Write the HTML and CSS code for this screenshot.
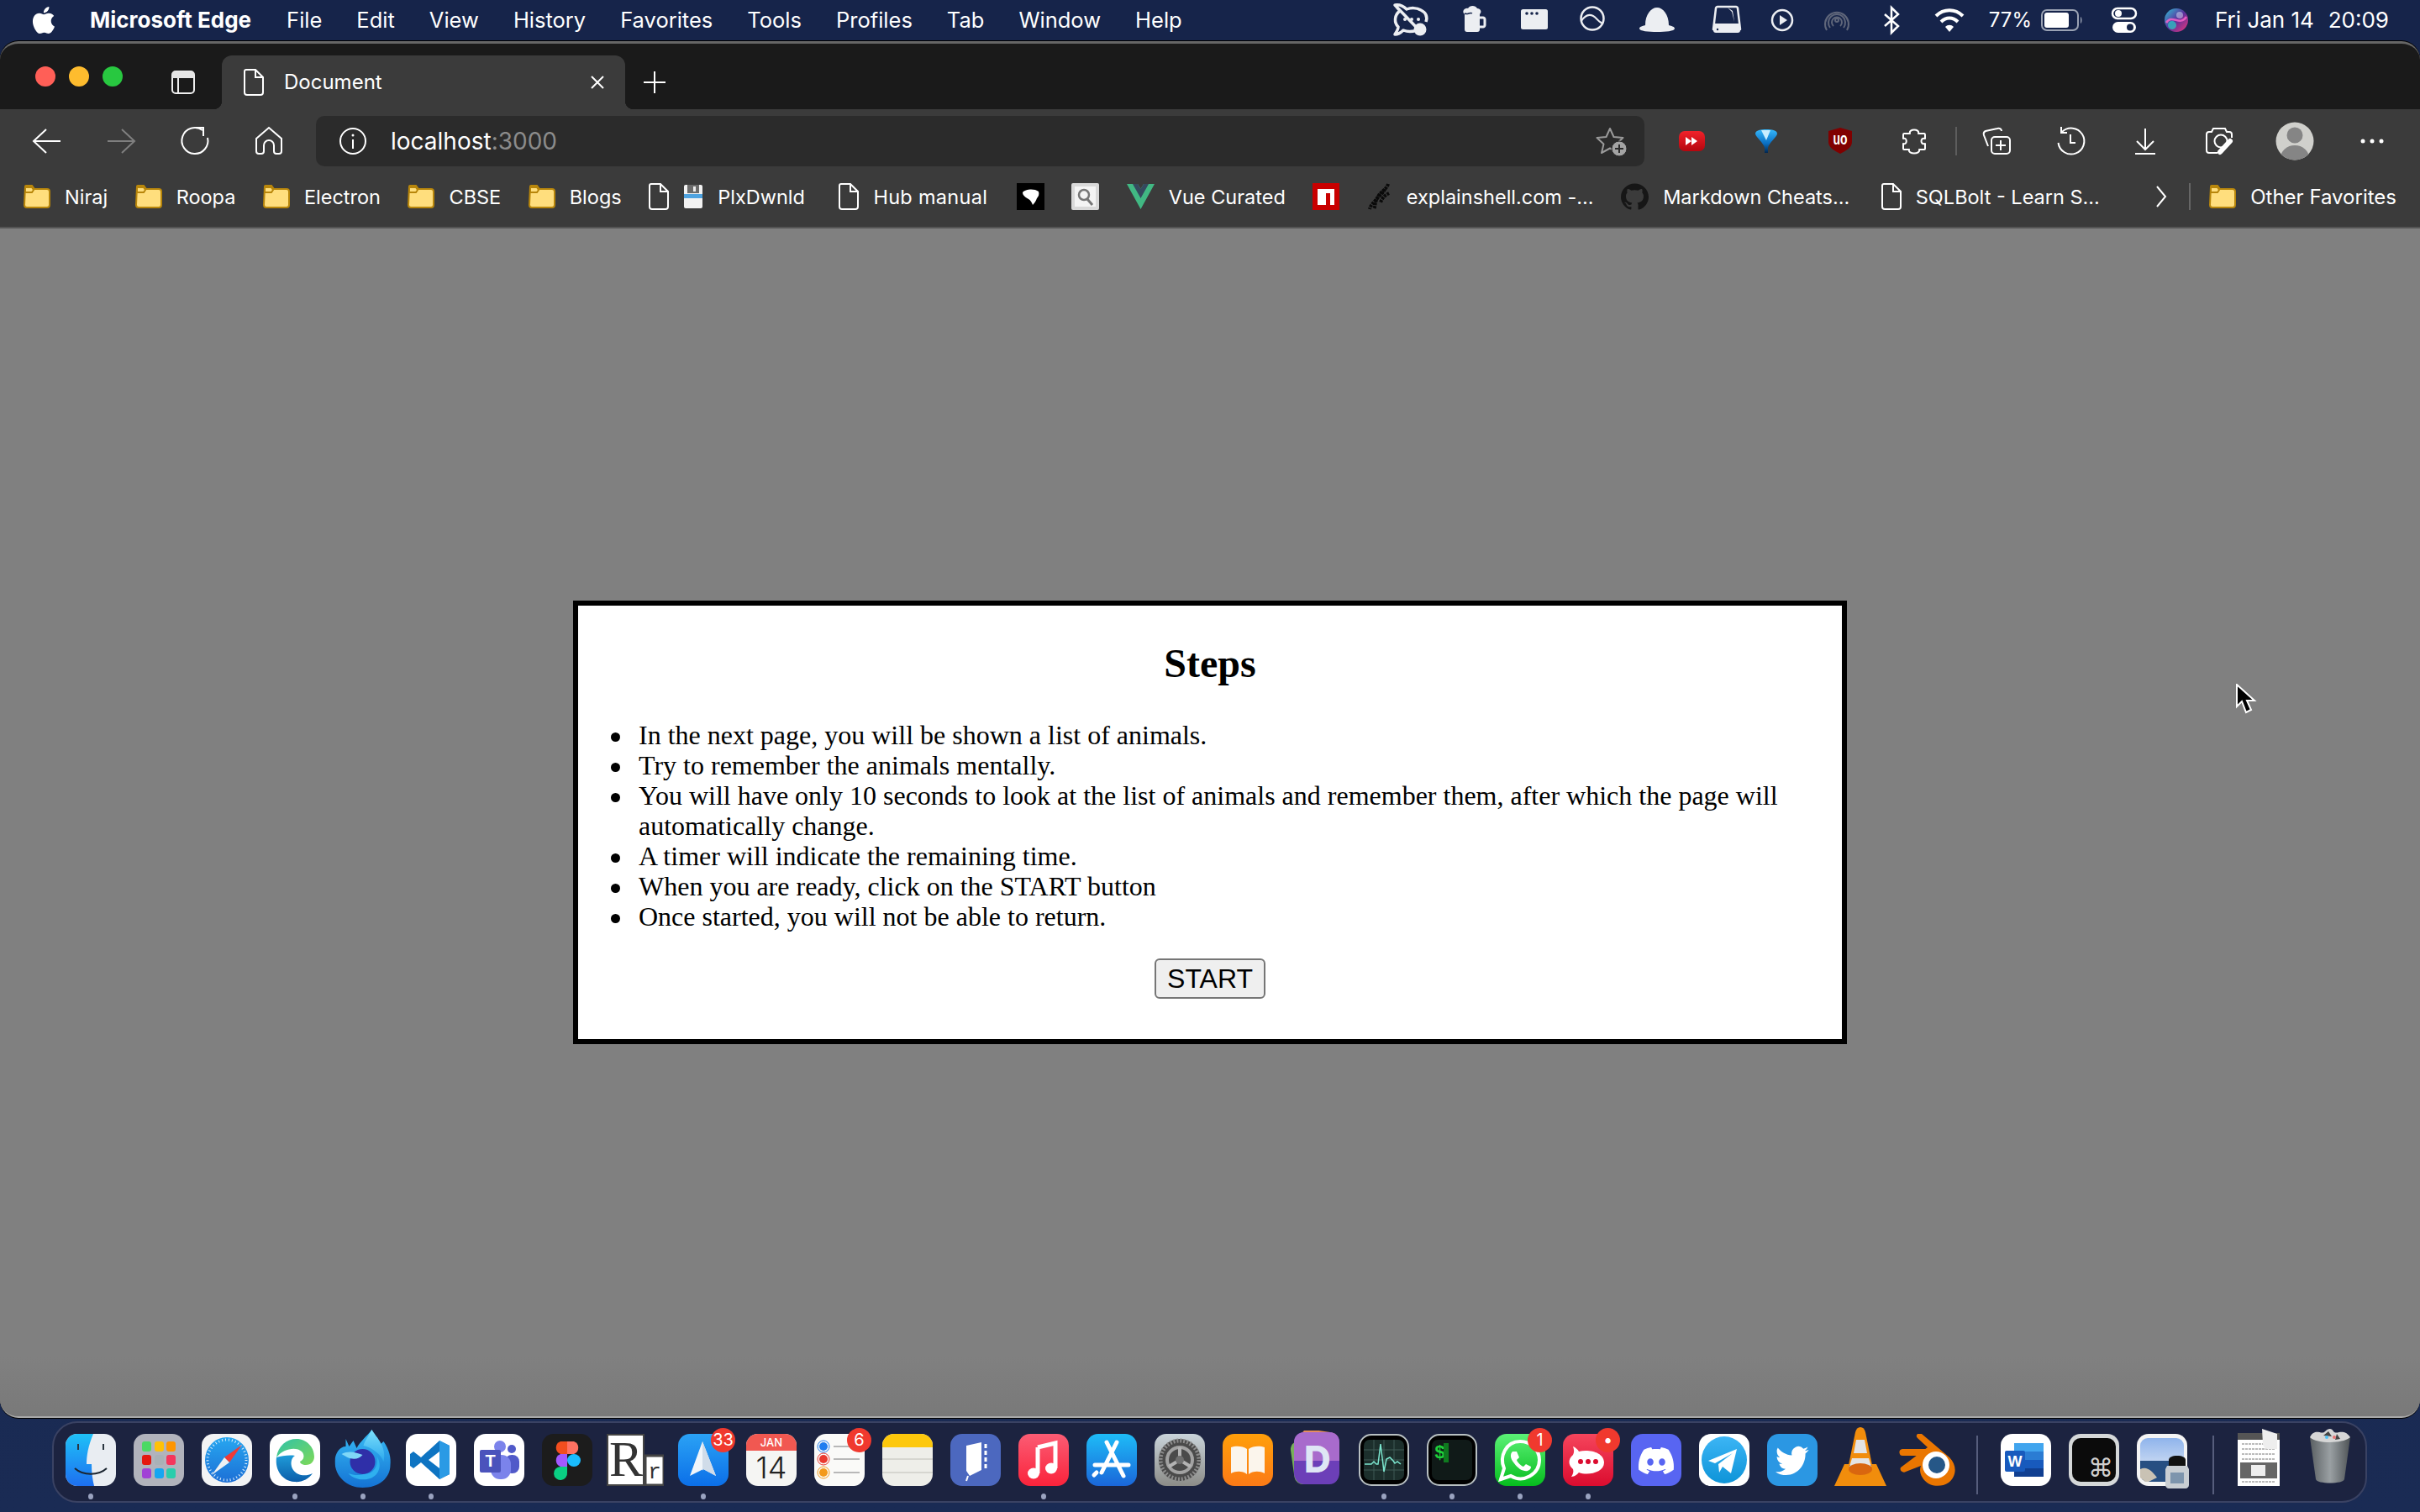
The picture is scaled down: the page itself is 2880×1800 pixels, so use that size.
FILE: index.html
```html
<!DOCTYPE html>
<html lang="en">
<head>
<meta charset="utf-8">
<title>Document</title>
<link rel="stylesheet" href="styles.css">
</head>
<body>
<header class="menubar">
  <svg class="apple" width="32" height="36" viewBox="0 0 24 24"><path fill="#fff" d="M12.152 6.896c-.948 0-2.415-1.078-3.96-1.04-2.04.027-3.91 1.183-4.961 3.014-2.117 3.675-.546 9.103 1.519 12.09 1.013 1.454 2.208 3.09 3.792 3.039 1.52-.065 2.09-.987 3.935-.987 1.831 0 2.35.987 3.96.948 1.637-.026 2.676-1.48 3.676-2.948 1.156-1.688 1.636-3.325 1.662-3.415-.039-.013-3.182-1.221-3.22-4.857-.026-3.04 2.48-4.494 2.597-4.559-1.429-2.09-3.623-2.324-4.39-2.376-2-.156-3.675 1.09-4.61 1.09zM15.53 3.83c.843-1.012 1.4-2.427 1.245-3.83-1.207.052-2.662.805-3.532 1.818-.78.896-1.454 2.338-1.273 3.714 1.338.104 2.715-.688 3.559-1.701"/></svg>
  <nav class="menus">
    <span class="appname">Microsoft Edge</span><span>File</span><span>Edit</span><span>View</span><span>History</span><span>Favorites</span><span>Tools</span><span>Profiles</span><span>Tab</span><span>Window</span><span>Help</span>
  </nav>
  <div class="tray">
    <svg width="76" height="50" viewBox="-38 -25 76 50"><path d="M-20-18C-14-19-9-16-6-13-1-15 6-15 11-12 17-9 19-4 17 2M8 11C2 14-5 14-10 12-13 15-17 17-20 17-18 14-16 11-16 8-21 3-21-6-14-11-16-13-18-16-20-18Z" fill="none" stroke="#eceef2" stroke-width="3.500" stroke-linejoin="round"/><circle cx="10" cy="11" r="7.500" fill="#eceef2"/><g fill="#eceef2"><circle cx="-8" cy="-1" r="2"/><circle cx="0" cy="-1" r="2"/><circle cx="8" cy="-1" r="2"/></g></svg>
    <svg width="76" height="50" viewBox="-38 -25 76 50"><path fill="#eceef2" d="M-13-7C-17-10-13-15-9-14-7-18 0-18 2-14 6-14 8-10 5-7V11C5 13 4 14 2 14H-10C-12 14-13 13-13 11Z"/><path fill="none" stroke="#eceef2" stroke-width="3" d="M5-3H9C10-3 11-2 11-1V6C11 7 10 8 9 8H5"/><path d="M-13-8C-9-6-7-10-4-8" fill="none" stroke="#16244a" stroke-width="1.500"/></svg>
    <svg width="64" height="50" viewBox="-32 -25 64 50"><rect x="-16" y="-13" width="32" height="24" rx="2.500" fill="#eceef2"/><g fill="#16244a"><circle cx="-9" cy="-8" r="1.800"/><circle cx="-3" cy="-8" r="1.800"/><circle cx="3" cy="-8" r="1.800"/></g></svg>
    <svg width="74" height="50" viewBox="-37 -25 74 50"><circle cy="-2" r="13.500" fill="none" stroke="#eceef2" stroke-width="2.500"/><path d="M-13 1C-8-7-3-7 1-5S8 3 13 4" fill="none" stroke="#eceef2" stroke-width="2"/></svg>
    <svg width="80" height="50" viewBox="-40 -25 80 50"><path fill="#eceef2" d="M-14 6C-14-7-7-15 0-15S14-7 14 6C18 7 21 8 21 10 21 13 10 14 0 14S-21 13-21 10C-21 8-18 7-14 6Z"/></svg>
    <svg width="86" height="50" viewBox="-43 -25 86 50"><path fill="none" stroke="#eceef2" stroke-width="2.500" stroke-linejoin="round" d="M-11-16H11C12-16 13-15 13-14L16 11H-16L-13-14C-13-15-12-16-11-16Z"/><path fill="#eceef2" d="M-16 4H16V12C16 14 15 15 13 15H-13C-15 15-16 14-16 12Z"/><circle cx="-11" cy="11" r="1.200" fill="#16244a"/><path d="M1-15L7-11 9 2 6-10Z" fill="#eceef2"/></svg>
    <svg width="46" height="50" viewBox="-23 -25 46 50"><circle r="12" fill="none" stroke="#eceef2" stroke-width="2.500"/><path d="M-3-6L6 0-3 6Z" fill="#eceef2"/></svg>
    <svg width="84" height="50" viewBox="-42 -25 84 50"><g fill="none" stroke="#5f667a" stroke-width="2"><path d="M-12 12A14 14 0 1 1 12 12"/><path d="M-8 9A10 10 0 1 1 8 9"/><path d="M-4 7A6 6 0 1 1 4 7"/><circle r="2"/></g></svg>
    <svg width="46" height="50" viewBox="-23 -25 46 50"><path d="M-8-7L8 7 0 15V-15L8-7-8 7" fill="none" stroke="#fff" stroke-width="2.500"/></svg>
    <svg width="92" height="50" viewBox="-46 -25 92 50"><g fill="none" stroke="#fff" stroke-width="4"><path d="M-16-5C-7-14 7-14 16-5"/><path d="M-10 2C-4-4 4-4 10 2"/></g><path d="M-5 8C-2 5 2 5 5 8L0 14Z" fill="#fff"/></svg>
    <span class="pct">77%</span>
    <svg width="68" height="50" viewBox="-34 -25 68 50"><rect x="-28" y="-12" width="43" height="24" rx="6" fill="none" stroke="#9aa2b3" stroke-width="2"/><rect x="-25" y="-9" width="29" height="18" rx="3" fill="#fff"/><path d="M18-4C20-3 20 3 18 4Z" fill="#9aa2b3"/></svg>
    <svg width="72" height="50" viewBox="-36 -25 72 50"><rect x="-14" y="-14" width="28" height="12" rx="6" fill="none" stroke="#fff" stroke-width="2.500"/><circle cx="-7" cy="-8" r="4" fill="#fff"/><rect x="-14" y="2" width="28" height="13" rx="6.500" fill="#fff"/><circle cx="7" cy="8.500" r="4" fill="#16244a"/></svg>
    <svg width="52" height="50" viewBox="-26 -25 52 50"><defs><linearGradient id="siri" x1="0" y1="0" x2="1" y2="1"><stop offset="0" stop-color="#2fc6d8"/><stop offset=".5" stop-color="#5a2f9c"/><stop offset="1" stop-color="#f0387b"/></linearGradient></defs><circle r="14" fill="url(#siri)"/><path d="M-12 3C-5-8 4 8 12-4" stroke="#f6c" stroke-width="2.500" fill="none" opacity=".8"/><circle cx="-5" cy="6" r="5" fill="#26d0c6" opacity=".7"/><circle cx="4" cy="-6" r="4" fill="#e8f6ff" opacity=".45"/></svg>
    <div class="clock"><span>Fri Jan 14</span><span>20:09</span></div>
  </div>
</header>

<main class="window">
  <div class="tabstrip">
    <div class="lights"><i class="light red"></i><i class="light amber"></i><i class="light green"></i></div>
    <svg class="sidebar-icon" width="28" height="28" viewBox="0 0 28 28"><rect x="1" y="1" width="26" height="26" rx="4" fill="none" stroke="#eee" stroke-width="2"/><path d="M1 5A4 4 0 0 1 5 1H23A4 4 0 0 1 27 5V9H1Z" fill="#e6e6e6"/><path d="M8 9V27" stroke="#eee" stroke-width="2"/></svg>
    <div class="tab">
      <svg width="24" height="32" viewBox="0 0 24 32"><path d="M3 1H14L23 10V28A3 3 0 0 1 20 31H4A3 3 0 0 1 1 28V3A2 2 0 0 1 3 1ZM14 1V10H23" fill="none" stroke="#fff" stroke-width="2"/></svg>
      <span class="tab-title">Document</span>
      <svg class="tab-close" width="16" height="16" viewBox="0 0 16 16"><path d="M1 1L15 15M15 1L1 15" stroke="#fff" stroke-width="2"/></svg>
    </div>
    <svg class="newtab" width="26" height="26" viewBox="0 0 26 26"><path d="M13 0V26M0 13H26" stroke="#fff" stroke-width="2"/></svg>
  </div>

  <div class="toolbar">
    <svg width="88" height="60" viewBox="-44 -30 88 60"><path d="M16 0H-16M-1-14L-16 0-1 14" class="ln"/></svg>
    <svg width="88" height="60" viewBox="-44 -30 88 60"><path d="M16 0H-16M1-14L16 0 1 14" class="ln dim"/></svg>
    <svg width="88" height="60" viewBox="-44 -30 88 60"><path d="M9-13A15.500 15.500 0 1 0 15-4M1-16H10V-6" class="ln"/></svg>
    <svg width="88" height="60" viewBox="-44 -30 88 60"><path d="M-15-3L0-16 15-3V12A3 3 0 0 1 12 15H9A3 3 0 0 1 6 12V5A6 6 0 0 0-6 5V12A3 3 0 0 1-9 15H-12A3 3 0 0 1-15 12Z" class="ln"/></svg>
    <div class="address">
      <svg width="32" height="32" viewBox="-16 -16 32 32"><circle r="15" class="ln"/><path d="M0-2V9" class="ln"/><circle cy="-7" r="1.500" fill="#fff"/></svg>
      <span class="url">localhost<span class="port">:3000</span></span>
      <svg class="star" width="40" height="36" viewBox="-20 -18 40 36"><path d="M-1-15L3.500-5 14.500-4 6.500 3.500 9 14-1 8.500-11 14-8.500 3.500-16.500-4-5.500-5Z" fill="none" stroke="#9a9a9a" stroke-width="2" stroke-linejoin="round"/><circle cx="10" cy="9" r="9" fill="#a3a3a3" stroke="#2b2b2b" stroke-width="1"/><path d="M10 4V14M5 9H15" stroke="#2b2b2b" stroke-width="2"/></svg>
    </div>
    <div class="tools-left">
      <svg width="88" height="60" viewBox="-44 -30 88 60"><defs><linearGradient id="yt" x1="0" y1="0" x2="0" y2="1"><stop offset="0" stop-color="#f0222a"/><stop offset="1" stop-color="#b5060e"/></linearGradient></defs><rect x="-16" y="-12" width="31" height="24" rx="7" fill="url(#yt)"/><path d="M-8-5L-1 0-8 5ZM-1-5L6 0-1 5Z" fill="#fff"/></svg>
      <svg width="88" height="60" viewBox="-44 -30 88 60"><defs><linearGradient id="pin" x1="0" y1="0" x2="0" y2="1"><stop offset="0" stop-color="#36b8fb"/><stop offset=".6" stop-color="#0a6fc4"/><stop offset="1" stop-color="#02264d"/></linearGradient></defs><path d="M-13-9C-13-13-6-14 0-14S13-13 13-9C13-5 3 2 2 8V14H-2V8C-3 2-13-5-13-9Z" fill="url(#pin)"/><path d="M-6-13H5L0-1Z" fill="#c9eeff"/></svg>
      <svg width="88" height="60" viewBox="-44 -30 88 60"><path d="M0-16L14-12V1C14 8 6 12 0 15-6 12-14 8-14 1V-12Z" fill="#800000"/><text class="ublock" y="4" text-anchor="middle" textLength="17" lengthAdjust="spacingAndGlyphs">uo</text></svg>
      <svg width="88" height="60" viewBox="-44 -30 88 60"><path d="M-5-9C-7-15 7-15 5-9H12C13-9 13-8 13-7V-3C7-5 7 5 13 3V9C13 10 13 10 12 10H6C8 16-8 16-6 10H-12C-13 10-13 10-13 9V3C-8 5-8-5-13-3V-7C-13-8-13-9-12-9Z" class="ln round"/></svg>
    </div>
    <i class="tool-sep"></i>
    <div class="tools-right">
      <svg width="88" height="60" viewBox="-44 -30 88 60"><path d="M-11 6L-16-7C-17-10-16-11-14-12L0-15C3-16 5-14 5-12" class="ln"/><rect x="-7" y="-5" width="22" height="20" rx="4" class="ln"/><path d="M4-1V11M-2 5H10" class="ln"/></svg>
      <svg width="88" height="60" viewBox="-44 -30 88 60"><path d="M-11-11A15.500 15.500 0 1 1-15.500 2M-12-17V-10H-5M-1-8V2H5" class="ln"/></svg>
      <svg width="88" height="60" viewBox="-44 -30 88 60"><path d="M0-15V10M-10 0L0 10 10 0M-12 15H12" class="ln"/></svg>
      <svg width="88" height="60" viewBox="-44 -30 88 60"><path d="M-2 14H-12C-14 14-15 13-15 11V-8C-15-10-14-11-12-11H-9L-7-15H7L9-11H12C14-11 15-10 15-8V-4" class="ln"/><circle cx="2" cy="0" r="7.500" class="ln"/><path d="M1 13L13 0" stroke="#fff" stroke-width="6" stroke-linecap="round"/></svg>
      <svg class="avatar" width="92" height="60" viewBox="-46 -30 92 60"><defs><clipPath id="av"><circle r="22.500"/></clipPath></defs><circle r="22.500" fill="#d0d0cc"/><g clip-path="url(#av)" fill="#858585"><circle cy="-7" r="9.500"/><ellipse cy="20" rx="17" ry="15"/></g></svg>
      <svg width="92" height="60" viewBox="-46 -30 92 60"><g fill="#fff"><circle cx="-11" r="2.500"/><circle r="2.500"/><circle cx="11" r="2.500"/></g></svg>
    </div>
  </div>

  <div class="bookmarks">
    <a class="bm"><svg class="folder" width="32" height="28" viewBox="0 0 32 28"><use href="#fld"/></svg>Niraj</a>
    <a class="bm"><svg class="folder" width="32" height="28" viewBox="0 0 32 28"><use href="#fld"/></svg>Roopa</a>
    <a class="bm"><svg class="folder" width="32" height="28" viewBox="0 0 32 28"><use href="#fld"/></svg>Electron</a>
    <a class="bm"><svg class="folder" width="32" height="28" viewBox="0 0 32 28"><use href="#fld"/></svg>CBSE</a>
    <a class="bm"><svg class="folder" width="32" height="28" viewBox="0 0 32 28"><use href="#fld"/></svg>Blogs</a>
    <a class="bm"><svg width="24" height="32" viewBox="0 0 24 32"><use href="#doc"/></svg><svg width="24" height="28" viewBox="0 0 24 28"><rect x="1" y="0" width="22" height="28" rx="2" fill="#f2f2f2"/><rect x="5" y="0" width="14" height="10" fill="#6b6b6b"/><rect x="12" y="2" width="3" height="6" fill="#eee"/><rect x="1" y="11" width="22" height="5" fill="#4fa3e0"/></svg>PlxDwnld</a>
    <a class="bm hub"><svg width="24" height="32" viewBox="0 0 24 32"><use href="#doc"/></svg>Hub manual</a>
    <svg width="33" height="32" viewBox="0 0 33 32"><rect width="33" height="32" fill="#000"/><path d="M7 11C10 7 21 6 26 10 27 13 26 16 24 18 23 21 21 24 19 26 18 23 16 20 14 19 11 17 7 15 7 11Z" fill="#fff"/></svg>
    <svg width="33" height="32" viewBox="0 0 33 32"><rect width="33" height="32" rx="2" fill="#d9d9d9"/><rect x="4" y="4" width="25" height="24" fill="#f4f4f4"/><circle cx="15" cy="14" r="6" fill="none" stroke="#777" stroke-width="2.500"/><path d="M19 19L25 26" stroke="#777" stroke-width="3"/></svg>
    <a class="bm"><svg width="33" height="32" viewBox="0 0 33 32"><path d="M0 1H13L16.500 7 20 1H33L16.500 31Z" fill="#41b883"/><path d="M7 1H13L16.500 7 20 1H26L16.500 18Z" fill="#35495e"/></svg>Vue Curated</a>
    <svg width="32" height="32" viewBox="0 0 32 32"><rect width="32" height="32" fill="#c80000"/><path d="M6 7H26V26H21V12H16V26H6Z" fill="#fff"/></svg>
    <a class="bm"><svg width="30" height="32" viewBox="0 0 30 32"><g fill="none" stroke="#0a0a0a" stroke-width="4" stroke-dasharray="3 1"><path d="M25 1C23 8 16 10 13 16S5 24 3 31"/><path d="M21 7C19 13 13 15 11 20S10 27 8 31"/><path d="M26 12C22 14 18 17 16 23"/></g></svg>explainshell.com -...</a>
    <a class="bm"><svg width="33" height="32" viewBox="0 0 24 24" preserveAspectRatio="none"><path fill="#161616" d="M12 .297c-6.630 0-12 5.373-12 12 0 5.303 3.438 9.800 8.205 11.385.600.113.820-.258.820-.577 0-.285-.010-1.040-.015-2.040-3.338.724-4.042-1.610-4.042-1.610C4.422 18.070 3.633 17.700 3.633 17.700c-1.087-.744.084-.729.084-.729 1.205.084 1.838 1.236 1.838 1.236 1.070 1.835 2.809 1.305 3.495.998.108-.776.417-1.305.760-1.605-2.665-.300-5.466-1.332-5.466-5.930 0-1.310.465-2.380 1.235-3.220-.135-.303-.540-1.523.105-3.176 0 0 1.005-.322 3.300 1.230.960-.267 1.980-.399 3-.405 1.020.006 2.040.138 3 .405 2.280-1.552 3.285-1.230 3.285-1.230.645 1.653.240 2.873.120 3.176.765.840 1.230 1.910 1.230 3.220 0 4.610-2.805 5.625-5.475 5.920.420.360.810 1.096.810 2.220 0 1.606-.015 2.896-.015 3.286 0 .315.210.690.825.570C20.565 22.092 24 17.592 24 12.297c0-6.627-5.373-12-12-12"/></svg>Markdown Cheats...</a>
    <a class="bm sql"><svg width="24" height="32" viewBox="0 0 24 32"><use href="#doc"/></svg>SQLBolt - Learn S...</a>
    <div class="bm-end">
      <svg width="14" height="26" viewBox="0 0 14 26"><path d="M2 1L12 13 2 25" fill="none" stroke="#fff" stroke-width="2"/></svg>
      <i class="bm-sep"></i>
      <a class="bm"><svg class="folder" width="32" height="28" viewBox="0 0 32 28"><use href="#fld"/></svg>Other Favorites</a>
    </div>
  </div>

  <section class="content">
    <article class="card">
      <h2 class="card-title">Steps</h2>
      <ul class="steps">
        <li>In the next page, you will be shown a list of animals.</li>
        <li>Try to remember the animals mentally.</li>
        <li>You will have only 10 seconds to look at the list of animals and remember them, after which the page will automatically change.</li>
        <li>A timer will indicate the remaining time.</li>
        <li>When you are ready, click on the START button</li>
        <li>Once started, you will not be able to return.</li>
      </ul>
      <div class="actions"><button class="start" type="button">START</button></div>
    </article>
    <svg class="cursor" width="26" height="36" viewBox="0 0 26 36"><path d="M2 1V27L8 21 13 34 19 31 14 20H23Z" fill="#000" stroke="#fff" stroke-width="2"/></svg>
  </section>
</main>

<footer class="dock">
  <div class="di"><svg width="60" height="62" viewBox="0 0 60 62"><defs><linearGradient id="fd" x1="0" y1="0" x2="0" y2="1"><stop offset="0" stop-color="#1fc1f7"/><stop offset="1" stop-color="#1d6ff0"/></linearGradient></defs><rect width="60" height="62" rx="14" fill="#e9edf2"/><path d="M14 0H33C27 14 25 26 25 36H31C31 46 32 54 34 62H14A14 14 0 0 1 0 48V14A14 14 0 0 1 14 0Z" fill="url(#fd)"/><path d="M15 12V19M45 12V19" stroke="#2a3540" stroke-width="2"/><path d="M11 41C21 50 39 50 49 41" fill="none" stroke="#1b2530" stroke-width="2"/></svg><i class="run"></i></div>
  <div class="di"><svg width="60" height="62" viewBox="0 0 60 62"><rect width="60" height="62" rx="14" fill="#b1b3bc"/><rect x="10" y="9" width="11" height="12" rx="3" fill="#4cd964"/><rect x="25" y="9" width="11" height="12" rx="3" fill="#ffc107"/><rect x="39" y="9" width="11" height="12" rx="3" fill="#ff9500"/><rect x="10" y="25" width="11" height="12" rx="3" fill="#e5170f"/><rect x="25" y="25" width="11" height="12" rx="3" fill="#a9b1b6"/><rect x="39" y="25" width="11" height="12" rx="3" fill="#f5365c"/><rect x="10" y="41" width="11" height="12" rx="3" fill="#a142d6"/><rect x="25" y="41" width="11" height="12" rx="3" fill="#15a6f2"/><rect x="39" y="41" width="11" height="12" rx="3" fill="#28cdac"/></svg></div>
  <div class="di"><svg width="60" height="62" viewBox="0 0 60 62"><defs><linearGradient id="sf" x1="0" y1="0" x2="0" y2="1"><stop offset="0" stop-color="#27a7f0"/><stop offset="1" stop-color="#1c6fd6"/></linearGradient></defs><rect width="60" height="62" rx="14" fill="#f2f3f4"/><ellipse cx="30" cy="31" rx="26" ry="27" fill="url(#sf)"/><ellipse cx="30" cy="31" rx="23" ry="24" fill="none" stroke="#dff0fb" stroke-width="3" stroke-dasharray="1 3"/><path d="M48 13L27 28 33 34Z" fill="#f03a36"/><path d="M12 49L33 34 27 28Z" fill="#eef1f3"/></svg></div>
  <div class="di"><svg width="60" height="62" viewBox="0 0 60 62"><defs><linearGradient id="ed" x1="0" y1="0" x2="1" y2="1"><stop offset="0" stop-color="#2fc2a8"/><stop offset="1" stop-color="#7ed957"/></linearGradient><linearGradient id="ed2" x1="0" y1="0" x2="0" y2="1"><stop offset="0" stop-color="#1f9bd8"/><stop offset="1" stop-color="#0b5eaa"/></linearGradient></defs><rect width="60" height="62" rx="14" fill="#fff"/><path d="M8 28C10 14 20 6 32 6 44 6 53 16 53 27 53 33 49 37 43 37 39 37 36 35 36 33 41 31 42 25 38 21 32 15 16 17 8 28Z" fill="url(#ed)"/><path d="M8 28C6 43 15 56 29 57 38 58 46 54 51 47 43 51 33 50 28 43 24 37 25 29 30 26 24 25 14 26 8 28Z" fill="url(#ed2)"/></svg><i class="run"></i></div>
  <div class="di"><svg class="over ff" width="67" height="69" viewBox="0 0 67 69"><defs><linearGradient id="ff" x1="0" y1="0" x2="0" y2="1"><stop offset="0" stop-color="#38bdf5"/><stop offset="1" stop-color="#1472d4"/></linearGradient><linearGradient id="ff2" x1="0" y1="0" x2="0" y2="1"><stop offset="0" stop-color="#7de0fb"/><stop offset="1" stop-color="#2aa8ee"/></linearGradient></defs><path d="M13 11L17 20 22 13 26 22C30 14 38 8 44 0 46 6 50 12 54 18 55 16 57 15 58 14 65 24 67 34 66 42 66 58 52 69 33 69 15 69 0 56 0 38 0 28 6 20 13 20Z" fill="url(#ff)"/><path d="M44 0C50 10 62 20 58 38 55 30 46 22 34 19 36 12 40 8 44 0Z" fill="url(#ff2)"/><circle cx="33" cy="38" r="15" fill="#2f2fa8"/><path d="M34 53C46 53 52 44 50 32 56 40 54 54 42 58 34 61 22 59 16 52 22 54 28 55 34 53Z" fill="#2fb0ef"/><path d="M8 29C18 24 26 28 33 30 29 35 22 36 15 33Z" fill="#7fd7f7"/></svg><i class="run"></i></div>
  <div class="di"><svg width="60" height="62" viewBox="0 0 60 62"><rect width="60" height="62" rx="14" fill="#fff"/><path d="M40 8L52 14V48L40 54 18 34 9 41 5 38V24L9 21 18 28ZM40 21L27 31 40 41Z" fill="#0e74c2"/><path d="M40 8L52 14V48L40 54Z" fill="#2a9ae5"/></svg><i class="run"></i></div>
  <div class="di"><svg width="60" height="62" viewBox="0 0 60 62"><rect width="60" height="62" rx="14" fill="#fff"/><circle cx="31" cy="15" r="7" fill="#7b83eb"/><circle cx="45" cy="18" r="5" fill="#5059c9"/><rect x="37" y="25" width="17" height="22" rx="8" fill="#5059c9"/><rect x="20" y="25" width="24" height="29" rx="11" fill="#7b83eb"/><rect x="7" y="19" width="25" height="27" rx="2" fill="#4b53bc"/><text class="msT" x="19.500" y="39" text-anchor="middle">T</text></svg></div>
  <div class="di"><svg width="60" height="62" viewBox="0 0 60 62"><rect width="60" height="62" rx="14" fill="#1c1c1c"/><path d="M30 9H22A8 8 0 0 0 22 24H30Z" fill="#f24e1e"/><path d="M30 9H38A8 8 0 0 1 38 24H30Z" fill="#ff7262"/><path d="M30 24H22A8 8 0 0 0 22 39H30Z" fill="#a259ff"/><ellipse cx="38" cy="31.500" rx="8" ry="7.500" fill="#1abcfe"/><path d="M22 39H30V46A8 8 0 1 1 22 39Z" fill="#0acf83"/></svg></div>
  <div class="di"><svg class="over" width="68" height="66" viewBox="0 0 68 66"><rect x="1" y="5" width="43" height="60" fill="#fff" stroke="#444" stroke-width="2"/><text class="rbig" x="23" y="54" text-anchor="middle">R</text><rect x="46" y="30" width="22" height="35" fill="#fff" stroke="#444" stroke-width="3"/><text class="rsmall" x="57" y="57" text-anchor="middle">r</text></svg></div>
  <div class="di"><svg width="60" height="62" viewBox="0 0 60 62"><defs><linearGradient id="sp" x1="0" y1="0" x2="0" y2="1"><stop offset="0" stop-color="#2aa2f5"/><stop offset="1" stop-color="#0b6fe8"/></linearGradient></defs><rect width="60" height="62" rx="14" fill="url(#sp)"/><path d="M29 9L45 50 30 42 14 50Z" fill="#f0f5fa"/><path d="M29 9V44L30 42 45 50Z" fill="#d0dce9"/></svg><b class="badge">33</b><i class="run"></i></div>
  <div class="di"><svg width="60" height="62" viewBox="0 0 60 62"><rect width="60" height="62" rx="14" fill="#f5f5f3"/><path d="M0 20V14A14 14 0 0 1 14 0H46A14 14 0 0 1 60 14V20Z" fill="#f15851"/><text class="calm" x="30" y="15" text-anchor="middle">JAN</text><text class="cald" x="30" y="53" text-anchor="middle">14</text></svg></div>
  <div class="di"><svg width="60" height="62" viewBox="0 0 60 62"><rect width="60" height="62" rx="14" fill="#fafaf8"/><circle cx="11" cy="15" r="5" fill="#1e7df0"/><circle cx="11" cy="15" r="7" fill="none" stroke="#1e7df0"/><circle cx="11" cy="30" r="5" fill="#ea3a30"/><circle cx="11" cy="30" r="7" fill="none" stroke="#ea3a30"/><circle cx="11" cy="46" r="5" fill="#f39a1c"/><circle cx="11" cy="46" r="7" fill="none" stroke="#f39a1c"/><path d="M23 15H54M23 30H54M23 46H54" stroke="#b8b8b8" stroke-width="2"/></svg><b class="badge">6</b></div>
  <div class="di"><svg width="60" height="62" viewBox="0 0 60 62"><rect width="60" height="62" rx="14" fill="#eeeee9"/><path d="M0 16V14A14 14 0 0 1 14 0H46A14 14 0 0 1 60 14V16Z" fill="#fdc80c"/><path d="M0 30H60M0 46H60" stroke="#d6d6d0" stroke-width="2"/></svg></div>
  <div class="di"><svg width="60" height="62" viewBox="0 0 60 62"><rect width="60" height="62" rx="14" fill="#4c68bf"/><path d="M19 14L37 10V43L23 50 19 44Z" fill="#fff"/><path d="M42 12V44" stroke="#fff" stroke-width="3" stroke-dasharray="5 3"/><path d="M21 50L19 56" stroke="#fff" stroke-width="2"/></svg></div>
  <div class="di"><svg width="60" height="62" viewBox="0 0 60 62"><defs><linearGradient id="mu" x1="0" y1="0" x2="0" y2="1"><stop offset="0" stop-color="#fb5c74"/><stop offset="1" stop-color="#fa233b"/></linearGradient></defs><rect width="60" height="62" rx="14" fill="url(#mu)"/><path d="M23 16L44 11V41" fill="none" stroke="#fff" stroke-width="5"/><path d="M23 16V47" stroke="#fff" stroke-width="5"/><ellipse cx="18" cy="47" rx="7" ry="6.500" fill="#fff"/><ellipse cx="39" cy="41" rx="7" ry="6.500" fill="#fff"/></svg><i class="run"></i></div>
  <div class="di"><svg width="60" height="62" viewBox="0 0 60 62"><defs><linearGradient id="as" x1="0" y1="0" x2="0" y2="1"><stop offset="0" stop-color="#1ebcf7"/><stop offset="1" stop-color="#1a66d9"/></linearGradient></defs><rect width="60" height="62" rx="14" fill="url(#as)"/><path d="M36 10L18 46M24 10L44 50M10 37H50M12 46L9 49" stroke="#fff" stroke-width="5" stroke-linecap="round" fill="none"/></svg></div>
  <div class="di"><svg width="60" height="62" viewBox="0 0 60 62"><defs><linearGradient id="sy" x1="0" y1="0" x2="0" y2="1"><stop offset="0" stop-color="#c9d4da"/><stop offset="1" stop-color="#8c8c88"/></linearGradient></defs><rect width="60" height="62" rx="14" fill="url(#sy)"/><circle cx="30" cy="31" r="25" fill="#4a4a4a"/><circle cx="30" cy="31" r="23" fill="none" stroke="#8d8d8d" stroke-width="5" stroke-dasharray="2 2"/><circle cx="30" cy="31" r="15" fill="none" stroke="#a2a2a2" stroke-width="4"/><path d="M30 31V16M30 31L17 39M30 31L43 39" stroke="#b3b3b3" stroke-width="4"/><circle cx="30" cy="31" r="5" fill="#6f6f6f"/></svg></div>
  <div class="di"><svg width="60" height="62" viewBox="0 0 60 62"><defs><linearGradient id="bk" x1="0" y1="0" x2="0" y2="1"><stop offset="0" stop-color="#ff9f0a"/><stop offset="1" stop-color="#fb7a16"/></linearGradient></defs><rect width="60" height="62" rx="14" fill="url(#bk)"/><path d="M29 18C24 14 15 14 10 16V47C16 44 24 44 29 48ZM31 18C36 14 45 14 50 16V47C44 44 36 44 31 48Z" fill="#fbf5ec"/></svg></div>
  <div class="di"><svg class="over" width="60" height="66" viewBox="0 0 60 66"><rect x="2" y="10" width="52" height="52" rx="10" fill="#79b05a" transform="rotate(-8 28 36)"/><rect x="10" y="0" width="46" height="40" rx="10" fill="#e58c5c" transform="rotate(8 32 20)"/><path d="M16 2H46C53 2 58 7 58 14V50C58 58 53 64 46 64H16C9 64 4 58 4 50V14C4 7 9 2 16 2Z" fill="#6c3fb8"/><path d="M16 2H46C53 2 58 7 58 14V36H4V14C4 7 9 2 16 2Z" fill="#a86bcc"/><text class="dash" x="32" y="50" text-anchor="middle">D</text></svg></div>
  <div class="di"><svg width="60" height="62" viewBox="0 0 60 62"><rect x="1" y="1" width="58" height="60" rx="14" fill="#000" stroke="#b8c0c2" stroke-width="2"/><rect x="6" y="7" width="48" height="48" rx="7" fill="#1c2f2c"/><path d="M6 19H54M6 31H54M6 43H54M18 7V55M30 7V55M42 7V55" stroke="#3f5a55"/><path d="M7 36H15L18 33 21 36H23L26 12 30 45 33 30 37 28 41 32 43 35 46 33 50 36" fill="none" stroke="#7ce8d0" stroke-width="1.500"/></svg><i class="run"></i></div>
  <div class="di"><svg width="60" height="62" viewBox="0 0 60 62"><rect x="1" y="1" width="58" height="60" rx="14" fill="#000" stroke="#b8c0c2" stroke-width="2"/><rect x="6" y="7" width="48" height="48" rx="7" fill="#101a18"/><text class="term" x="9" y="29">$</text><rect x="20" y="11" width="6" height="23" fill="#0f7a1f"/></svg><i class="run"></i></div>
  <div class="di"><svg width="60" height="62" viewBox="0 0 60 62"><defs><linearGradient id="wa" x1="0" y1="0" x2="0" y2="1"><stop offset="0" stop-color="#5bf176"/><stop offset="1" stop-color="#06bd1e"/></linearGradient></defs><rect width="60" height="62" rx="14" fill="url(#wa)"/><path d="M7 54L11 41C5 27 13 9 30 9 43 9 53 19 53 31 53 48 34 59 19 50Z" fill="none" stroke="#fff" stroke-width="4"/><path d="M21 21C18 24 18 29 23 35 28 42 34 45 39 44 42 43 43 41 43 39L37 36 34 39C31 38 27 34 26 31L29 28 26 21Z" fill="#fff"/></svg><b class="badge">1</b><i class="run"></i></div>
  <div class="di"><svg width="60" height="62" viewBox="0 0 60 62"><defs><linearGradient id="rc" x1="0" y1="0" x2="0" y2="1"><stop offset="0" stop-color="#f5455c"/><stop offset="1" stop-color="#db0c2f"/></linearGradient></defs><rect width="60" height="62" rx="14" fill="url(#rc)"/><path d="M12 15C15 16 18 19 19 21 31 18 49 22 49 34 49 46 30 50 19 46 17 48 14 51 10 51 12 48 13 45 12 42 6 37 6 30 12 25 14 21 13 18 12 15Z" fill="#fff"/><g fill="#db0c2f"><circle cx="21" cy="33" r="3"/><circle cx="30" cy="33" r="3"/><circle cx="39" cy="33" r="3"/></g></svg><b class="badge">•</b><i class="run"></i></div>
  <div class="di"><svg width="60" height="62" viewBox="0 0 60 62"><rect width="60" height="62" rx="14" fill="#5865f2"/><g transform="translate(9 11) scale(1.750 1.750)"><path fill="#fff" d="M20.317 4.3698a19.7913 19.7913 0 00-4.8851-1.5152.0741.0741 0 00-.0785.0371c-.211.3753-.4447.8648-.6083 1.2495-1.8447-.2762-3.68-.2762-5.4868 0-.1636-.3933-.4058-.8742-.6177-1.2495a.077.077 0 00-.0785-.037 19.7363 19.7363 0 00-4.8852 1.515.0699.0699 0 00-.0321.0277C.5334 9.0458-.319 13.5799.0992 18.0578a.0824.0824 0 00.0312.0561c2.0528 1.5076 4.0413 2.4228 5.9929 3.0294a.0777.0777 0 00.0842-.0276c.4616-.6304.8731-1.2952 1.226-1.9942a.076.076 0 00-.0416-.1057c-.6528-.2476-1.2743-.5495-1.8722-.8923a.077.077 0 01-.0076-.1277c.1258-.0943.2517-.1923.3718-.2914a.0743.0743 0 01.0776-.0105c3.9278 1.7933 8.18 1.7933 12.0614 0a.0739.0739 0 01.0785.0095c.1202.099.246.1981.3728.2924a.077.077 0 01-.0066.1276 12.2986 12.2986 0 01-1.873.8914.0766.0766 0 00-.0407.1067c.3604.698.7719 1.3628 1.225 1.9932a.076.076 0 00.0842.0286c1.961-.6067 3.9495-1.5219 6.0023-3.0294a.077.077 0 00.0313-.0552c.5004-5.177-.8382-9.6739-3.5485-13.6604a.061.061 0 00-.0312-.0286zM8.02 15.3312c-1.1825 0-2.1569-1.0857-2.1569-2.419 0-1.3332.9555-2.4189 2.157-2.4189 1.2108 0 2.1757 1.0952 2.1568 2.419 0 1.3332-.9555 2.4189-2.1569 2.4189zm7.9748 0c-1.1825 0-2.1569-1.0857-2.1569-2.419 0-1.3332.9554-2.4189 2.1569-2.4189 1.2108 0 2.1757 1.0952 2.1568 2.419 0 1.3332-.946 2.4189-2.1568 2.4189Z"/></g></svg></div>
  <div class="di"><svg width="60" height="62" viewBox="0 0 60 62"><defs><linearGradient id="tg" x1="0" y1="0" x2="0" y2="1"><stop offset="0" stop-color="#3cb5f5"/><stop offset="1" stop-color="#0e94d8"/></linearGradient></defs><rect width="60" height="62" rx="14" fill="#fff"/><ellipse cx="30" cy="31" rx="27" ry="28" fill="url(#tg)"/><path d="M11 32L45 18 38 47 28 39 24 46 23 36 40 23 19 35Z" fill="#fff"/></svg></div>
  <div class="di"><svg width="60" height="62" viewBox="0 0 60 62"><rect width="60" height="62" rx="14" fill="#2b97e3"/><g transform="translate(10 11) scale(1.650 1.750)"><path fill="#fff" d="M23.953 4.570a10 10 0 01-2.825.775 4.958 4.958 0 002.163-2.723c-.951.555-2.005.959-3.127 1.184a4.920 4.920 0 00-8.384 4.482C7.690 8.095 4.067 6.130 1.640 3.162a4.822 4.822 0 00-.666 2.475c0 1.710.870 3.213 2.188 4.096a4.904 4.904 0 01-2.228-.616v.060a4.923 4.923 0 003.946 4.827 4.996 4.996 0 01-2.212.085 4.936 4.936 0 004.604 3.417 9.867 9.867 0 01-6.102 2.105c-.390 0-.779-.023-1.170-.067a13.995 13.995 0 007.557 2.209c9.053 0 13.998-7.496 13.998-13.985 0-.210 0-.420-.015-.630A9.935 9.935 0 0024 4.590z"/></g></svg></div>
  <div class="di"><svg class="over" width="62" height="70" viewBox="0 0 62 70"><path d="M31 0C34 0 36 2 37 6L45 45H17L25 6C26 2 28 0 31 0Z" fill="#f18d0c"/><path d="M26 15H36L39 31H23ZM21 37H41L44 47H18Z" fill="#e4e4e4"/><path d="M12 44H18C17 52 24 55 31 55S45 52 44 44H50L62 70H0Z" fill="#f18d0c"/><ellipse cx="31" cy="50" rx="14" ry="7" fill="#d9660f"/></svg></div>
  <div class="di"><svg class="over" width="70" height="62" viewBox="0 0 70 62"><path d="M2 40L34 16 22 5A3.500 3.500 0 0 1 27 0L60 28C69 37 69 50 59 58 50 64 37 63 30 55 25 49 24 43 26 38L8 45C5 47 0 44 2 40ZM4 18H38L30 26H5A4 4 0 0 1 4 18Z" fill="#ea7600"/><circle cx="44" cy="37" r="16" fill="#fff"/><circle cx="45" cy="37" r="10" fill="#265787"/></svg></div>
  <i class="dock-sep first"></i>
  <div class="di"><svg width="60" height="62" viewBox="0 0 60 62"><rect width="60" height="62" rx="14" fill="#fff"/><rect x="16" y="11" width="35" height="10" fill="#41a5ee"/><rect x="16" y="21" width="35" height="10" fill="#2b7cd3"/><rect x="16" y="31" width="35" height="10" fill="#185abd"/><rect x="16" y="41" width="35" height="10" fill="#103f91"/><rect x="5" y="20" width="24" height="25" rx="2" fill="#185abd"/><text class="wordW" x="17" y="39" text-anchor="middle">W</text></svg></div>
  <div class="di"><svg width="60" height="62" viewBox="0 0 60 62"><rect width="60" height="62" rx="14" fill="#d5d8d9"/><rect x="4" y="5" width="52" height="52" rx="10" fill="#0b0b0b"/><text class="kbd" x="38" y="51" text-anchor="middle">⌘</text></svg></div>
  <div class="di"><svg class="over prev" width="66" height="66" viewBox="0 0 66 66"><defs><linearGradient id="pv" x1="0" y1="0" x2="0" y2="1"><stop offset="0" stop-color="#8fb4ec"/><stop offset=".6" stop-color="#c7d8f2"/></linearGradient></defs><rect width="60" height="62" rx="14" fill="#f4f4f4"/><rect x="4" y="5" width="52" height="52" rx="9" fill="url(#pv)"/><path d="M4 32H56V48A9 9 0 0 1 47 57H13A9 9 0 0 1 4 48Z" fill="#274f82"/><path d="M4 42C12 38 18 44 24 52L14 57H10L4 52Z" fill="#c9c2b4"/><path d="M36 38H60L62 42V61C62 63 60 65 58 65H38C36 65 34 63 34 61V42Z" fill="#c9ced3"/><path d="M38 38V31C38 28 42 26 48 26S58 28 58 31V38Z" fill="#111"/><rect x="40" y="46" width="16" height="13" fill="#7e95ad"/></svg></div>
  <i class="dock-sep last"></i>
  <div class="di"><svg class="over" width="60" height="68" viewBox="0 0 60 68"><rect x="1" y="5" width="50" height="63" fill="#fff"/><rect x="1" y="5" width="50" height="8" fill="#555"/><path d="M6 18H45M6 24H45M6 30H45M6 36H45" stroke="#777" stroke-dasharray="3 1"/><rect x="4" y="40" width="44" height="19" fill="#666"/><rect x="17" y="43" width="17" height="13" fill="#eee"/><path d="M6 63H45" stroke="#777" stroke-dasharray="3 1"/><path d="M30 0L48 6V24H38C34 24 32 22 31 18Z" fill="#eee"/></svg></div>
  <div class="di"><svg class="over" width="60" height="70" viewBox="0 0 60 70"><defs><linearGradient id="tr" x1="0" y1="0" x2="1" y2="0"><stop offset="0" stop-color="#5a5f62"/><stop offset=".5" stop-color="#9aa0a3"/><stop offset="1" stop-color="#4e5356"/></linearGradient></defs><path d="M6 12H54L47 62C46 68 14 68 13 62Z" fill="url(#tr)"/><path d="M6 12C12 0 20 10 24 5 28 1 32 1 34 5 38 10 46 0 54 12 46 20 14 20 6 12Z" fill="#d6d6d6"/><path d="M22 10L28 5 32 11ZM38 8L42 14 36 15Z" fill="#444"/><circle cx="26" cy="12" r="2" fill="#4fc3f7"/><circle cx="35" cy="12" r="2" fill="#e57373"/></svg></div>
</footer>

<svg class="defs" width="0" height="0" aria-hidden="true">
  <symbol id="fld" viewBox="0 0 32 28"><path d="M2 2A1 1 0 0 1 3 1H10L13 5H28A3 3 0 0 1 31 8V24A3 3 0 0 1 28 27H4A3 3 0 0 1 1 24Z" fill="#ffde7d" stroke="#b8860b" stroke-width="2"/><path d="M2 9V3H10L12 6 10 9Z" fill="#ffde7d" stroke="#b8860b" stroke-width="2"/></symbol>
  <symbol id="doc" viewBox="0 0 24 32"><path d="M3 1H14L23 10V28A3 3 0 0 1 20 31H4A3 3 0 0 1 1 28V3A2 2 0 0 1 3 1ZM14 1V10H23" fill="none" stroke="#fff" stroke-width="2"/></symbol>
</svg>
</body>
</html>
```
FILE: styles.css
```css
* { box-sizing: border-box; }
html, body { margin: 0; padding: 0; }
body {
  width: 2880px;
  height: 1800px;
  overflow: hidden;
  display: flex;
  flex-direction: column;
  background: linear-gradient(180deg, #16244a 0%, #1a2b54 100%);
  font-family: Inter, "Noto Sans", sans-serif;
  color: #fff;
}

/* Menu bar */
.menubar {
  height: 49px;
  flex: none;
  display: flex;
  align-items: center;
  padding: 0 37px 2px 36px;
  background: #16244a;
  font-size: 25.5px;
}
.apple { flex: none; }
.menus { display: flex; gap: 41px; margin-left: 39px; white-space: nowrap; }
.appname { font-weight: 700; font-size: 26px; margin-right: 1px; }
.tray { margin-left: auto; display: flex; align-items: center; }
.tray svg { flex: none; display: block; }
.pct { width: 58px; text-align: right; padding-right: 6px; font-size: 24px; }
.clock { width: 227px; padding-left: 20px; display: flex; justify-content: space-between; white-space: nowrap; font-size: 26px; }

/* Window */
.window {
  height: 1639px;
  flex: none;
  display: flex;
  flex-direction: column;
  border-radius: 22px;
  overflow: hidden;
  border-top: 3px solid #666;
  border-bottom: 2px solid #a8a8a8;
  box-shadow: 0 -1px 0 #000, 0 1px 0 #000;
  background: #808080;
}
.tabstrip {
  height: 78px;
  flex: none;
  display: flex;
  align-items: flex-end;
  background: #1a1a1a;
  position: relative;
}
.lights { display: flex; gap: 16px; padding: 0 0 27px 42px; align-self: flex-end; }
.light { width: 24px; height: 24px; border-radius: 50%; display: block; }
.red { background: #ff5f57; }
.amber { background: #febc2e; }
.green { background: #28c840; }
.sidebar-icon { margin: 0 0 18px 58px; flex: none; }
.tab {
  width: 480px;
  height: 64px;
  margin-left: 32px;
  background: #3b3b3b;
  border-radius: 12px 12px 0 0;
  display: flex;
  align-items: center;
  padding: 0 25px 0 26px;
  position: relative;
  font-size: 24px;
  flex: none;
}
.tab::before, .tab::after {
  content: "";
  position: absolute;
  bottom: 0;
  width: 10px;
  height: 10px;
}
.tab::before { left: -10px; background: radial-gradient(circle at 0 0, transparent 10px, #3b3b3b 10.500px); }
.tab::after { right: -10px; background: radial-gradient(circle at 100% 0, transparent 10px, #3b3b3b 10.500px); }
.tab-title { margin-left: 24px; padding-bottom: 2px; }
.tab-close { margin-left: auto; }
.newtab { margin: 0 0 19px 22px; flex: none; }

/* Toolbar */
.toolbar {
  height: 68px;
  flex: none;
  display: flex;
  align-items: flex-end;
  background: #3b3b3b;
  padding: 0 12px;
}
.toolbar svg { flex: none; display: block; }
.ln { fill: none; stroke: #fff; stroke-width: 2; }
.round { stroke-linejoin: round; }
.dim { stroke: #7f7f7f; }
.address {
  width: 1581px;
  height: 60px;
  margin-left: 12px;
  background: #2b2b2b;
  border-radius: 10px;
  display: flex;
  align-items: center;
  padding: 0 20px 0 28px;
  flex: none;
}
.url { margin-left: 29px; font-size: 28px; }
.port { color: #8b8b8b; }
.star { margin-left: auto; }
.tools-left { display: flex; margin-left: 13px; }
.tool-sep { width: 2px; height: 34px; background: #5d5d5d; margin: 0 4px 13px 5px; flex: none; }
.tools-right { display: flex; }
.ublock { font: 700 20px "Liberation Sans", sans-serif; fill: #fff; }

/* Bookmarks */
.bookmarks {
  height: 74px;
  flex: none;
  display: flex;
  align-items: center;
  gap: 32.5px;
  padding: 0 28px;
  background: #3b3b3b;
  border-bottom: 2px solid #555;
  font-size: 23.5px;
  white-space: nowrap;
}
.bookmarks svg { flex: none; display: block; }
.bm { display: flex; align-items: center; gap: 17px; }
.hub { margin: 0 2px 0 8px; letter-spacing: .3px; }
.sql { margin-left: 5px; }
.bm-end { margin-left: auto; display: flex; align-items: center; gap: 26px; font-size: 24px; }
.bm-sep { width: 2px; height: 32px; background: #666; margin-right: -4px; }

/* Page */
.content {
  flex: 1;
  min-height: 0;
  display: flex;
  align-items: center;
  justify-content: center;
  background: linear-gradient(180deg, #808080 calc(100% - 70px), #797979 100%);
  position: relative;
}
.card {
  width: 1516px;
  height: 528px;
  background: #fff;
  border: 6px solid #000;
  color: #000;
  font-family: "Liberation Serif", "Times New Roman", serif;
  font-size: 32px;
  line-height: 36px;
}
.card-title {
  margin: 42px 0 40px;
  font-size: 48px;
  line-height: 54px;
  font-weight: 700;
  text-align: center;
}
.steps { margin: 0 0 32px; padding: 0 36px 0 72px; list-style: none; }
.steps li { position: relative; }
.steps li::before {
  content: "";
  position: absolute;
  left: -33px;
  top: 15px;
  width: 11px;
  height: 11px;
  border-radius: 50%;
  background: #000;
}
.actions { text-align: center; }
.start {
  width: 132px;
  height: 48px;
  padding: 0;
  background: #efefef;
  border: 2px solid #767676;
  border-radius: 6px;
  color: #000;
  font-family: "Liberation Sans", Arial, sans-serif;
  font-size: 32px;
  line-height: 36px;
}
.cursor { position: absolute; left: 2660px; top: 542px; }

/* Dock */
.dock {
  width: 2755px;
  height: 97px;
  flex: none;
  margin: 4px 0 0 62px;
  display: flex;
  align-items: flex-start;
  gap: 21px;
  padding: 13px 14px 0;
  background: #1c2340;
  border: 2px solid #3a4263;
  border-radius: 30px;
}
.di { width: 60px; height: 62px; flex: none; position: relative; }
.di svg { display: block; }
.di svg.over { position: absolute; left: 50%; bottom: 0; transform: translateX(-50%); }
.di svg.ff { bottom: -2px; }
.di svg.prev { left: 33px; bottom: -4px; }
.run {
  position: absolute;
  left: 27px;
  top: 71px;
  width: 6px;
  height: 7px;
  border-radius: 50%;
  background: #9aa3c0;
}
.badge {
  position: absolute;
  right: -8px;
  top: -7px;
  width: 29px;
  height: 29px;
  border-radius: 50%;
  background: #f0392e;
  color: #fff;
  font: 400 20px/29px Inter, sans-serif;
  text-align: center;
}
.dock-sep { width: 2px; height: 70px; background: #565d7c; flex: none; }
.dock-sep.first { margin: 2px 6px 0; }
.dock-sep.last { margin: 2px 6px 0 9px; }
.defs { position: absolute; }

.msT { font: 700 20px "Liberation Sans", sans-serif; fill: #fff; }
.rbig { font: 400 60px "Liberation Serif", serif; fill: #333; }
.rsmall { font: 400 26px "Liberation Mono", monospace; fill: #333; }
.calm { font: 500 13px Inter, sans-serif; fill: #fff; }
.cald { font: 300 36px Inter, sans-serif; fill: #222; }
.dash { font: 800 44px Inter, sans-serif; fill: #dfe6f5; }
.term { font: 700 22px "Liberation Mono", monospace; fill: #1fd13a; }
.wordW { font: 700 18px "Liberation Sans", sans-serif; fill: #fff; }
.kbd { font: 400 30px "DejaVu Sans", sans-serif; fill: #cfcfcf; }
```
